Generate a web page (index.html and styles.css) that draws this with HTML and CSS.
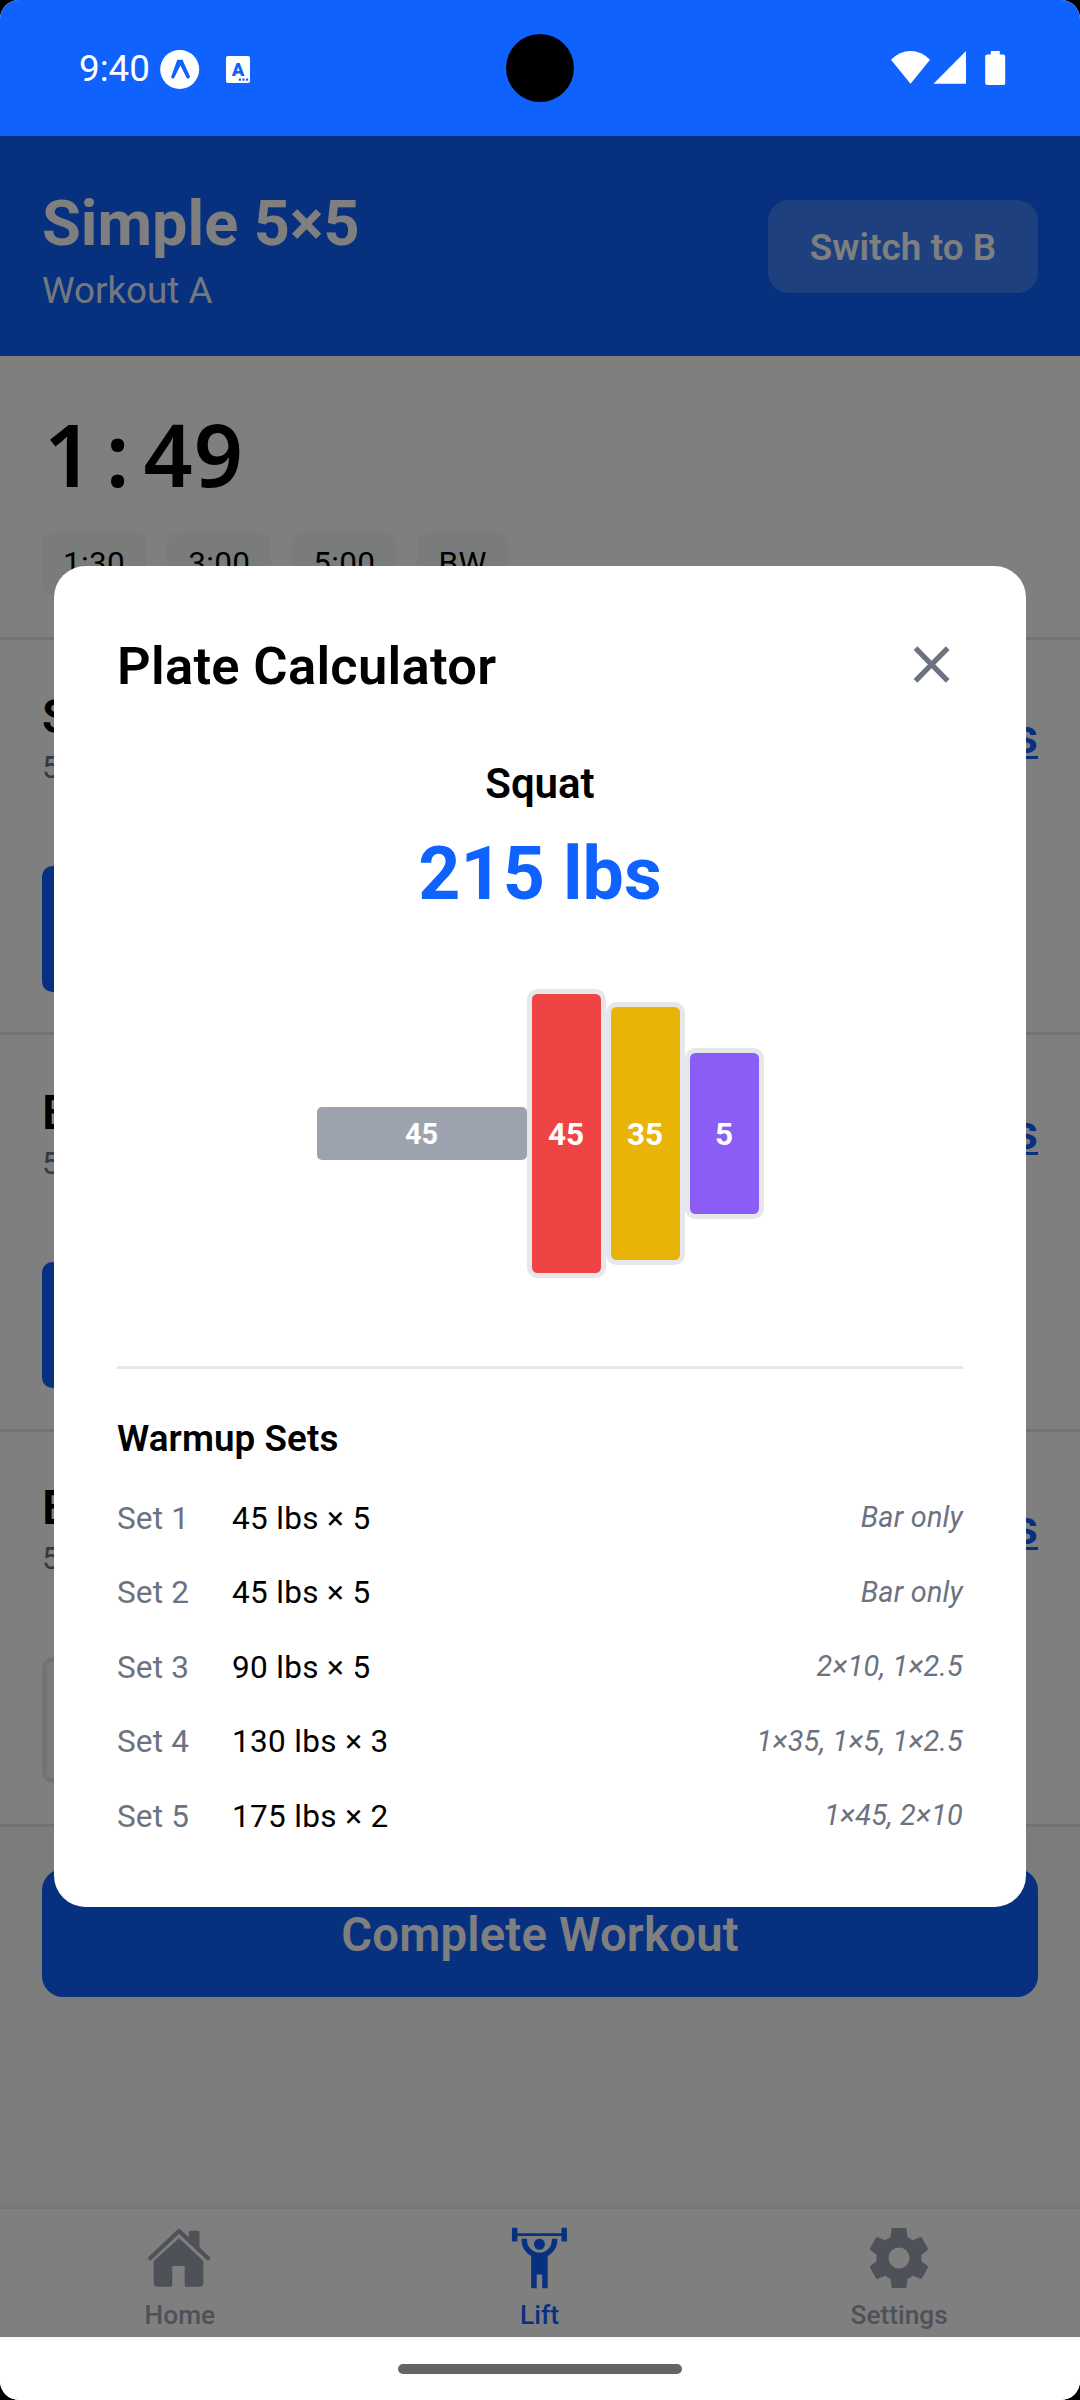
FILE: index.html
```html
<!DOCTYPE html>
<html lang="en">
<head>
<meta charset="utf-8">
<title>Simple 5×5</title>
<link rel="stylesheet" href="styles.css">
</head>
<body>
<div class="screen">
  <div class="status-bar">
    <div class="status-left">
      <span class="clock">9:40</span>
      <svg class="expo-icon" viewBox="0 0 40 40">
        <circle cx="19.7" cy="19.4" r="19.5" fill="#fff"/>
        <path d="M17.3 9.7H22.5L30.1 26.8C29.4 28.6 28 29 26.8 28.2L20.4 15.5L14 28.2C12.8 29 11.6 28.4 11.1 26.9Z" fill="#0f62fe"/>
      </svg>
      <svg class="letter-icon" viewBox="0 0 24 27">
        <rect width="24" height="27" rx="2" fill="#fff"/>
        <text x="12" y="19.5" text-anchor="middle" class="letter-icon-text">A</text>
        <g fill="#0f62fe"><rect x="12.8" y="22.5" width="2.2" height="2.2"/><rect x="16.4" y="22.5" width="2.2" height="2.2"/><rect x="20" y="22.5" width="2.2" height="2.2"/></g>
      </svg>
    </div>
    <div class="camera"></div>
    <svg class="status-right" viewBox="0 0 115 34">
      <g fill="#fff">
        <path d="M0 8.8Q8.5 0 19.5 0T39 8.8L19.5 32.7Z"/>
        <path d="M75 0V32.7H42.5Z"/>
        <path d="M99.8 0h9v3.5h3.4q2 0 2 2v26.500q0 2-2 2h-16q-2 0-2-2v-26.500q0-2 2-2h3.600z"/>
      </g>
    </svg>
  </div>

  <div class="app">
    <header class="header">
      <div class="heading">
        <h1 class="app-title">Simple 5×5</h1>
        <p class="app-subtitle">Workout A</p>
      </div>
      <button class="switch">Switch to B</button>
    </header>

    <section class="timer">
      <div class="time"><span class="time-lead">1</span><span>:</span><span>4</span><span>9</span></div>
      <div class="chips">
        <span class="chip">1:30</span><span class="chip">3:00</span><span class="chip">5:00</span><span class="chip">BW</span>
      </div>
    </section>

    <section class="exercise exercise-first">
      <div class="exercise-head">
        <div><h2 class="exercise-name">Squat</h2><p class="exercise-scheme">5×5</p></div>
        <a class="weight">215 lbs</a>
      </div>
      <div class="sets"><i class="set"></i><i class="set"></i><i class="set"></i><i class="set"></i><i class="set"></i></div>
    </section>
    <section class="exercise">
      <div class="exercise-head">
        <div><h2 class="exercise-name">Bench Press</h2><p class="exercise-scheme">5×5</p></div>
        <a class="weight">135 lbs</a>
      </div>
      <div class="sets"><i class="set"></i><i class="set"></i><i class="set"></i><i class="set"></i><i class="set"></i></div>
    </section>
    <section class="exercise exercise-last">
      <div class="exercise-head">
        <div><h2 class="exercise-name">Barbell Row</h2><p class="exercise-scheme">5×5</p></div>
        <a class="weight">115 lbs</a>
      </div>
      <div class="sets"><i class="set set-todo"></i><i class="set set-todo"></i><i class="set set-todo"></i><i class="set set-todo"></i><i class="set set-todo"></i></div>
    </section>

    <div class="finish"><button class="complete">Complete Workout</button></div>

    <nav class="tabs">
      <div class="tab">
        <svg class="tab-icon" viewBox="0 0 66 66">
          <path d="M3.200 33.200L32 6L61 33.200" fill="none" stroke="currentColor" stroke-width="4.300" stroke-linecap="round" stroke-linejoin="round"/>
          <path d="M43.500 5.700H51q1.500 0 1.500 1.500V27.500L41.900 17V7.200q0-1.500 1.600-1.500z" fill="currentColor"/>
          <path d="M32 13L56.400 36V58q0 3.700-3.700 3.700H39.200q-1.500 0-1.500-1.500V41H25.300V60.200q0 1.500-1.500 1.500H10.400q-3.700 0-3.700-3.700V36Z" fill="currentColor"/>
        </svg>
        <span class="tab-label">Home</span>
      </div>
      <div class="tab tab-active">
        <svg class="tab-icon" viewBox="0.2 0 24 24">
          <path fill="currentColor" d="M12 5C10.890 5 10 5.890 10 7A2 2 0 0 0 12 9A2 2 0 0 0 14 7C14 5.890 13.110 5 12 5M22 1V6H20V4H4V6H2V1H4V3H20V1H22M15 11.260V23H13V18H11V23H9V11.260C6.930 10.170 5.500 8 5.500 5.500L5.500 5H7.500L7.500 5.500A4.500 4.500 0 0 0 12 10A4.500 4.500 0 0 0 16.500 5.500L16.500 5H18.500L18.500 5.500C18.500 8 17.070 10.170 15 11.260Z"/>
        </svg>
        <span class="tab-label">Lift</span>
      </div>
      <div class="tab">
        <svg class="tab-icon" viewBox="1 1 22 22">
          <path fill="currentColor" d="M12 15.500A3.500 3.500 0 0 1 8.500 12A3.500 3.500 0 0 1 12 8.500A3.500 3.500 0 0 1 15.500 12A3.500 3.500 0 0 1 12 15.500M19.430 12.970C19.470 12.650 19.500 12.330 19.500 12C19.500 11.670 19.470 11.340 19.430 11L21.540 9.370C21.730 9.220 21.780 8.950 21.660 8.730L19.660 5.270C19.540 5.050 19.270 4.960 19.050 5.050L16.560 6.050C16.040 5.660 15.500 5.320 14.870 5.070L14.500 2.420C14.460 2.180 14.250 2 14 2H10C9.750 2 9.540 2.180 9.500 2.420L9.130 5.070C8.500 5.320 7.960 5.660 7.440 6.050L4.950 5.050C4.730 4.960 4.460 5.050 4.340 5.270L2.340 8.730C2.210 8.950 2.270 9.220 2.460 9.370L4.570 11C4.530 11.340 4.500 11.670 4.500 12C4.500 12.330 4.530 12.650 4.570 12.970L2.460 14.630C2.270 14.780 2.210 15.050 2.340 15.270L4.340 18.730C4.460 18.950 4.730 19.030 4.950 18.950L7.440 17.940C7.960 18.340 8.500 18.680 9.130 18.930L9.500 21.580C9.540 21.820 9.750 22 10 22H14C14.250 22 14.460 21.820 14.500 21.580L14.870 18.930C15.500 18.670 16.040 18.340 16.560 17.940L19.050 18.950C19.270 19.030 19.540 18.950 19.660 18.730L21.660 15.270C21.780 15.050 21.730 14.780 21.540 14.630L19.430 12.970Z"/>
        </svg>
        <span class="tab-label">Settings</span>
      </div>
    </nav>

    <div class="backdrop">
      <div class="modal">
        <div class="modal-head">
          <h2 class="modal-title">Plate Calculator</h2>
          <svg class="close" viewBox="0 0 63 63">
            <path d="M15.500 15.200L47.700 47.800M47.700 15.200L15.500 47.800" stroke="#6b7280" stroke-width="5.200"/>
          </svg>
        </div>
        <p class="lift-name">Squat</p>
        <p class="lift-weight">215 lbs</p>
        <div class="barbell">
          <div class="bar">45</div>
          <div class="plate plate-45">45</div>
          <div class="plate plate-35">35</div>
          <div class="plate plate-5">5</div>
        </div>
        <div class="warmup">
          <h3 class="warmup-title">Warmup Sets</h3>
          <div class="row"><span class="row-set">Set 1</span><span class="row-load">45 lbs × 5</span><em class="row-plates">Bar only</em></div>
          <div class="row"><span class="row-set">Set 2</span><span class="row-load">45 lbs × 5</span><em class="row-plates">Bar only</em></div>
          <div class="row"><span class="row-set">Set 3</span><span class="row-load">90 lbs × 5</span><em class="row-plates">2×10, 1×2.5</em></div>
          <div class="row"><span class="row-set">Set 4</span><span class="row-load">130 lbs × 3</span><em class="row-plates">1×35, 1×5, 1×2.5</em></div>
          <div class="row"><span class="row-set">Set 5</span><span class="row-load">175 lbs × 2</span><em class="row-plates">1×45, 2×10</em></div>
        </div>
      </div>
    </div>
  </div>

  <div class="gesture-bar"><div class="pill"></div></div>
</div>
</body>
</html>
```
FILE: styles.css
```css
* { box-sizing: border-box; margin: 0; padding: 0; }
body { background: #000; font-family: Roboto, "Liberation Sans", sans-serif; color: #000; }
h1, h2, h3 { font-weight: 600; }
button { border: 0; font-family: inherit; }
svg { display: block; }

.screen {
  width: 1080px; height: 2400px; overflow: hidden;
  border-radius: 19px; background: #fff;
  display: flex; flex-direction: column;
}

/* System status bar */
.status-bar {
  height: 136px; flex: none; background: #0f62fe; color: #fff;
  display: grid; grid-template-columns: 1fr 68px 1fr; align-items: start;
}
.status-left { display: flex; padding: 50px 0 0 79px; }
.clock { width: 81px; font-size: 36.75px; line-height: 37px; }
.expo-icon { width: 40px; height: 40px; }
.letter-icon { width: 24px; height: 27px; margin: 5.500px 0 0 26px; }
.letter-icon-text { font-size: 18.500px; font-weight: 900; fill: #0f62fe; }
.camera { width: 68px; height: 68px; margin-top: 34px; border-radius: 50%; background: #000; }
.status-right { width: 115px; height: 34px; margin-top: 51px; justify-self: end; margin-right: 74px; }

.app { position: relative; flex: 1; display: flex; flex-direction: column; }

/* Header */
.header {
  height: 220px; padding: 0 42px; background: #0f62fe; color: #fff;
  display: flex; align-items: center; justify-content: space-between;
}
.heading { padding-top: 7px; }
.app-title { font-size: 63px; font-weight: 700; line-height: 74px; }
.app-subtitle { margin-top: 8px; font-size: 36.750px; line-height: 43px; opacity: .9; }
.switch {
  width: 270px; height: 93px; padding-top: 4px; border-radius: 21px; background: rgba(255, 255, 255, .2);
  color: #fff; font-size: 36.750px; font-weight: 600; line-height: 44px; letter-spacing: .1px;
}

/* Rest timer */
.timer { height: 284px; padding: 48px 42px 0; border-bottom: 3px solid #e5e7eb; }
.time { display: flex; font-family: "Noto Sans", sans-serif; font-size: 86px; font-weight: 600; line-height: 100px; }
.time span { width: 50.400px; text-align: center; }
.time .time-lead { padding-left: 2px; }
.chips { display: flex; gap: 21px; margin-top: 28px; }
.chip {
  height: 63px; padding: 0 21px; border-radius: 10.500px; background: #f4f9f6;
  font-size: 31.500px; line-height: 63px; letter-spacing: .35px;
}

/* Exercises */
.exercise { height: 397px; padding: 49px 42px 0; border-bottom: 3px solid #e5e7eb; }
.exercise-first { height: 395px; padding-top: 48px; }
.exercise-last { height: 395px; padding-top: 47px; }
.exercise-head { display: flex; align-items: center; justify-content: space-between; }
.exercise-name { font-size: 47.250px; line-height: 56px; padding-top: 1px; }
.exercise-scheme { margin-top: 4px; font-size: 31.500px; line-height: 38px; color: #6b7280; }
.weight {
  padding-bottom: 2px; color: #0f62fe; font-size: 47.250px; font-weight: 600; line-height: 56px; display: block;
  text-decoration: underline; text-decoration-thickness: 3px; text-underline-offset: 3px;
}
.sets { display: flex; gap: 21px; margin-top: 79px; }
.set { width: 126px; height: 126px; border-radius: 10.500px; background: #0f62fe; }
.set-todo { background: #f4f9f6; border: 5px solid #e5e7eb; }

.finish { flex: 1; padding: 42px; background: #f6fbf8; }
.complete {
  display: block; width: 100%; height: 128px; padding-top: 3px; border-radius: 21px; background: #0f62fe;
  color: #fff; font-size: 47.250px; font-weight: 600; letter-spacing: .2px;
}

/* Bottom tabs */
.tabs {
  height: 130px; padding-right: 1px; background: #fff; border-top: 2px solid #ececec;
  box-shadow: 0 0 7px rgba(0, 0, 0, .08); display: flex;
}
.tab { flex: 1; padding-top: 16px; display: flex; flex-direction: column; align-items: center; color: #9ca3af; }
.tab-active { color: #0f62fe; }
.tab-icon { width: 66px; height: 66px; }
.tab-label { margin-top: 9px; font-size: 26.250px; font-weight: 500; line-height: 30px; }

/* Plate calculator */
.backdrop {
  position: absolute; inset: 0; background: rgba(0, 0, 0, .5);
  display: flex; align-items: center; justify-content: center;
}
.modal { width: 972px; height: 1341px; padding: 63px; border-radius: 31.500px; background: #fff; }
.modal-head { height: 71px; display: flex; align-items: center; justify-content: space-between; }
.modal-title { padding-top: 2px; font-size: 52.500px; line-height: 62px; letter-spacing: .3px; }
.close { width: 63px; height: 63px; }
.lift-name { margin-top: 59px; font-size: 42px; font-weight: 600; line-height: 50px; text-align: center; }
.lift-weight { margin-top: 22px; font-size: 73.500px; font-weight: 700; line-height: 86px; text-align: center; color: #0f62fe; }
.barbell { height: 289px; margin-top: 72px; display: flex; align-items: center; justify-content: center; color: #fff; font-weight: 700; }
.bar {
  width: 210px; height: 53px; border-radius: 5px; background: #9ca3af;
  font-size: 28.875px; line-height: 54px; text-align: center;
}
.plate {
  width: 79px; border: 5px solid #e5e7eb; border-radius: 10.500px; font-size: 31.500px;
  display: flex; align-items: center; justify-content: center; padding-top: 1px;
}
.plate-45 { height: 289px; background: #ef4444; }
.plate-35 { height: 263px; background: #eab308; }
.plate-5 { height: 171px; background: #8b5cf6; }
.warmup { margin-top: 88px; padding-top: 48px; border-top: 3px solid #e5e7eb; }
.warmup-title { margin-bottom: 20px; font-size: 36.750px; line-height: 44px; letter-spacing: .1px; }
.row { height: 74.500px; display: flex; align-items: center; font-size: 31.500px; }
.row-set { width: 115px; color: #6b7280; letter-spacing: .15px; }
.row-load { letter-spacing: .35px; }
.row-plates { margin-left: auto; padding-bottom: 2px; font-size: 28.875px; color: #6b7280; letter-spacing: .2px; }

/* System gesture bar */
.gesture-bar { height: 63px; flex: none; padding-top: 27px; background: #fff; }
.pill { width: 284px; height: 10px; margin: 0 auto; border-radius: 5px; background: #646464; }
```
